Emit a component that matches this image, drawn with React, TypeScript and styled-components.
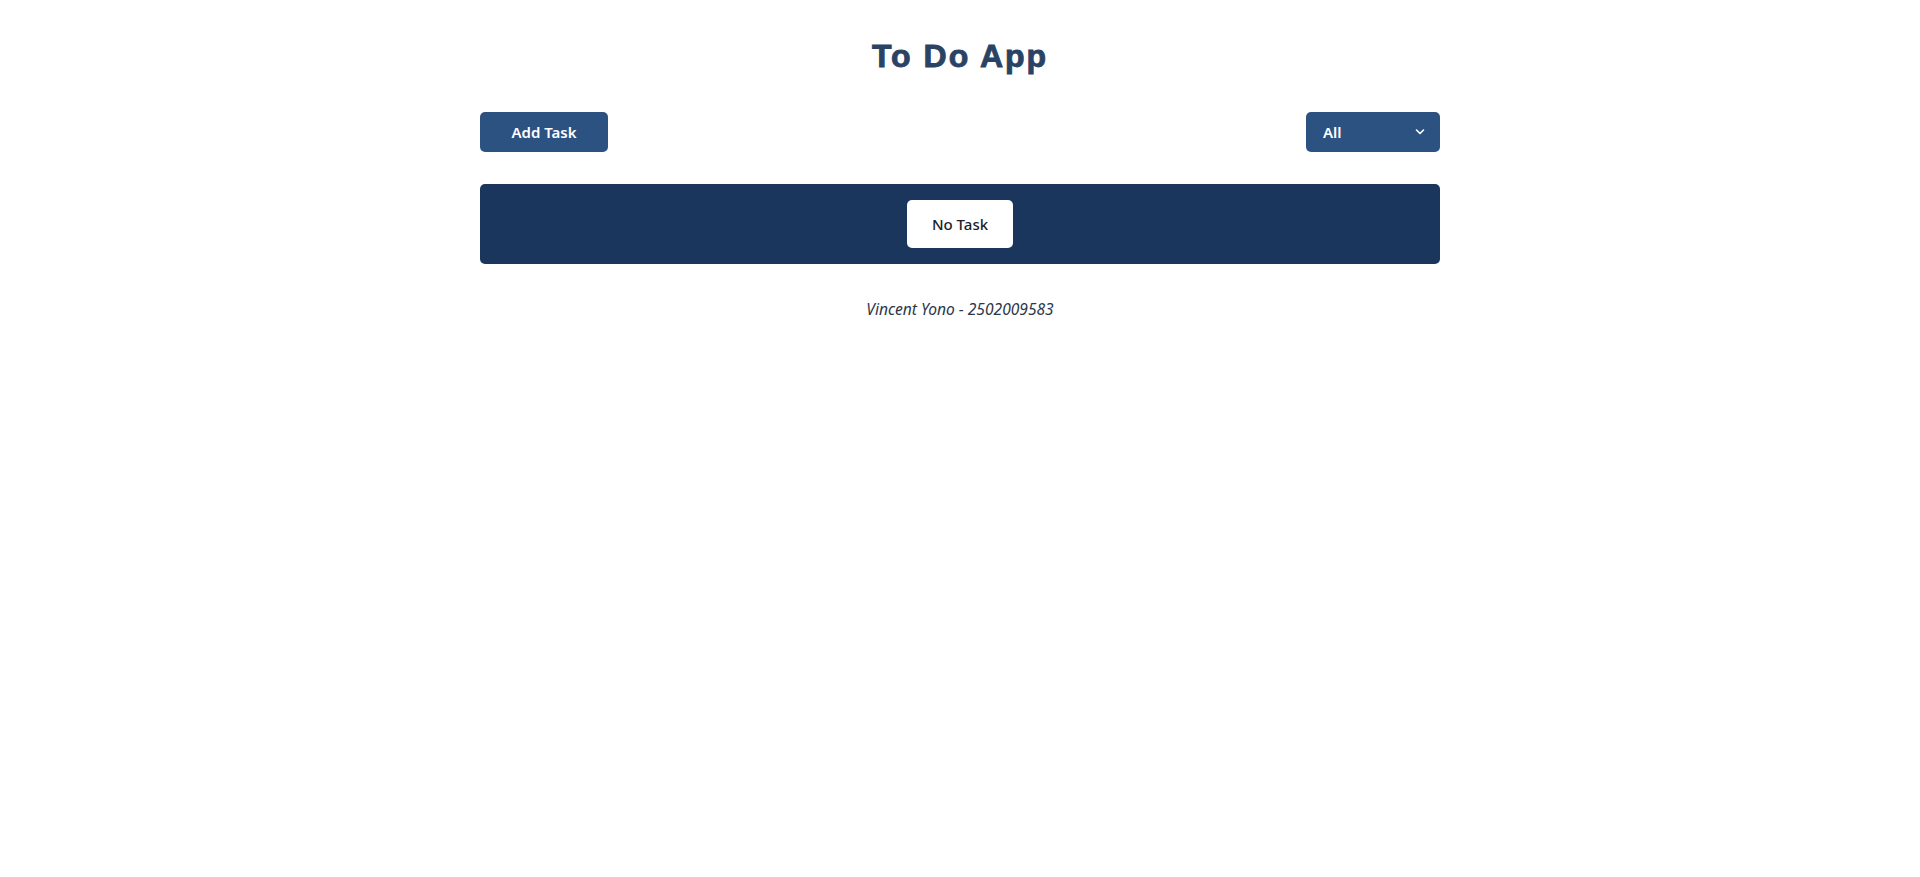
import React, { useState } from "react";
import styled, { createGlobalStyle } from "styled-components";

const GlobalStyle = createGlobalStyle`
  html, body { margin: 0; padding: 0; background: #ffffff; }
  body { font-family: "Noto Sans", "Open Sans", sans-serif; }
  * { box-sizing: border-box; }
`;

const Page = styled.div`
  width: 960px;
  margin: 0 auto;
  display: flex;
  flex-direction: column;
`;

const Title = styled.h1`
  margin: 37px 0 0;
  height: 38px;
  line-height: 38px;
  text-align: center;
  font-family: "Liberation Sans", Arial, sans-serif;
  font-weight: 700;
  font-size: 32px;
  letter-spacing: 2px;
  color: #2a4365;
  -webkit-text-stroke: 0.9px #2a4365;
`;

const Toolbar = styled.div`
  margin-top: 37px;
  display: flex;
  justify-content: space-between;
  align-items: center;
`;

const PrimaryButton = styled.button`
  height: 40px;
  width: 128px;
  border: none;
  border-radius: 5px;
  background: #2c5282;
  color: #ffffff;
  font-family: "Noto Sans", sans-serif;
  font-weight: 600;
  font-size: 15px;
  cursor: pointer;
`;

const SelectWrap = styled.div`
  position: relative;
  width: 134px;
  height: 40px;
`;

const Select = styled.select`
  appearance: none;
  width: 100%;
  height: 100%;
  border: none;
  border-radius: 5px;
  background: #2c5282;
  color: #ffffff;
  font-family: "Noto Sans", sans-serif;
  font-weight: 600;
  font-size: 15px;
  padding: 0 0 0 17px;
  outline: none;
`;

const Chevron = styled.svg`
  position: absolute;
  right: 15px;
  top: 16px;
  pointer-events: none;
`;

const Panel = styled.div`
  margin-top: 32px;
  background: #1a365d;
  border-radius: 5px;
  padding: 16px;
  display: flex;
  justify-content: center;
`;

const EmptyBadge = styled.div`
  height: 48px;
  width: 106px;
  border-radius: 5px;
  background: #ffffff;
  color: #1a202c;
  font-family: "Noto Sans", sans-serif;
  font-weight: 500;
  font-size: 15px;
  display: flex;
  align-items: center;
  justify-content: center;
`;

const Footer = styled.p`
  margin: 34px 0 0;
  text-align: center;
  font-family: "Noto Sans", sans-serif;
  font-style: italic;
  font-size: 15.6px;
  color: #2d3748;
`;

export default function App() {
  const [filter, setFilter] = useState("all");
  return (
    <>
      <GlobalStyle />
      <Page>
        <Title>To Do App</Title>
        <Toolbar>
          <PrimaryButton>Add Task</PrimaryButton>
          <SelectWrap>
            <Select value={filter} onChange={(e) => setFilter(e.target.value)}>
              <option value="all">All</option>
              <option value="incomplete">Incomplete</option>
              <option value="complete">Complete</option>
            </Select>
            <Chevron width="10" height="8" viewBox="0 0 10 8">
              <path d="M1.5 2 L5 5.5 L8.5 2" fill="none" stroke="#ffffff" strokeWidth="1.6" strokeLinecap="round" strokeLinejoin="round" />
            </Chevron>
          </SelectWrap>
        </Toolbar>
        <Panel>
          <EmptyBadge>No Task</EmptyBadge>
        </Panel>
        <Footer>Vincent Yono - 2502009583</Footer>
      </Page>
    </>
  );
}
